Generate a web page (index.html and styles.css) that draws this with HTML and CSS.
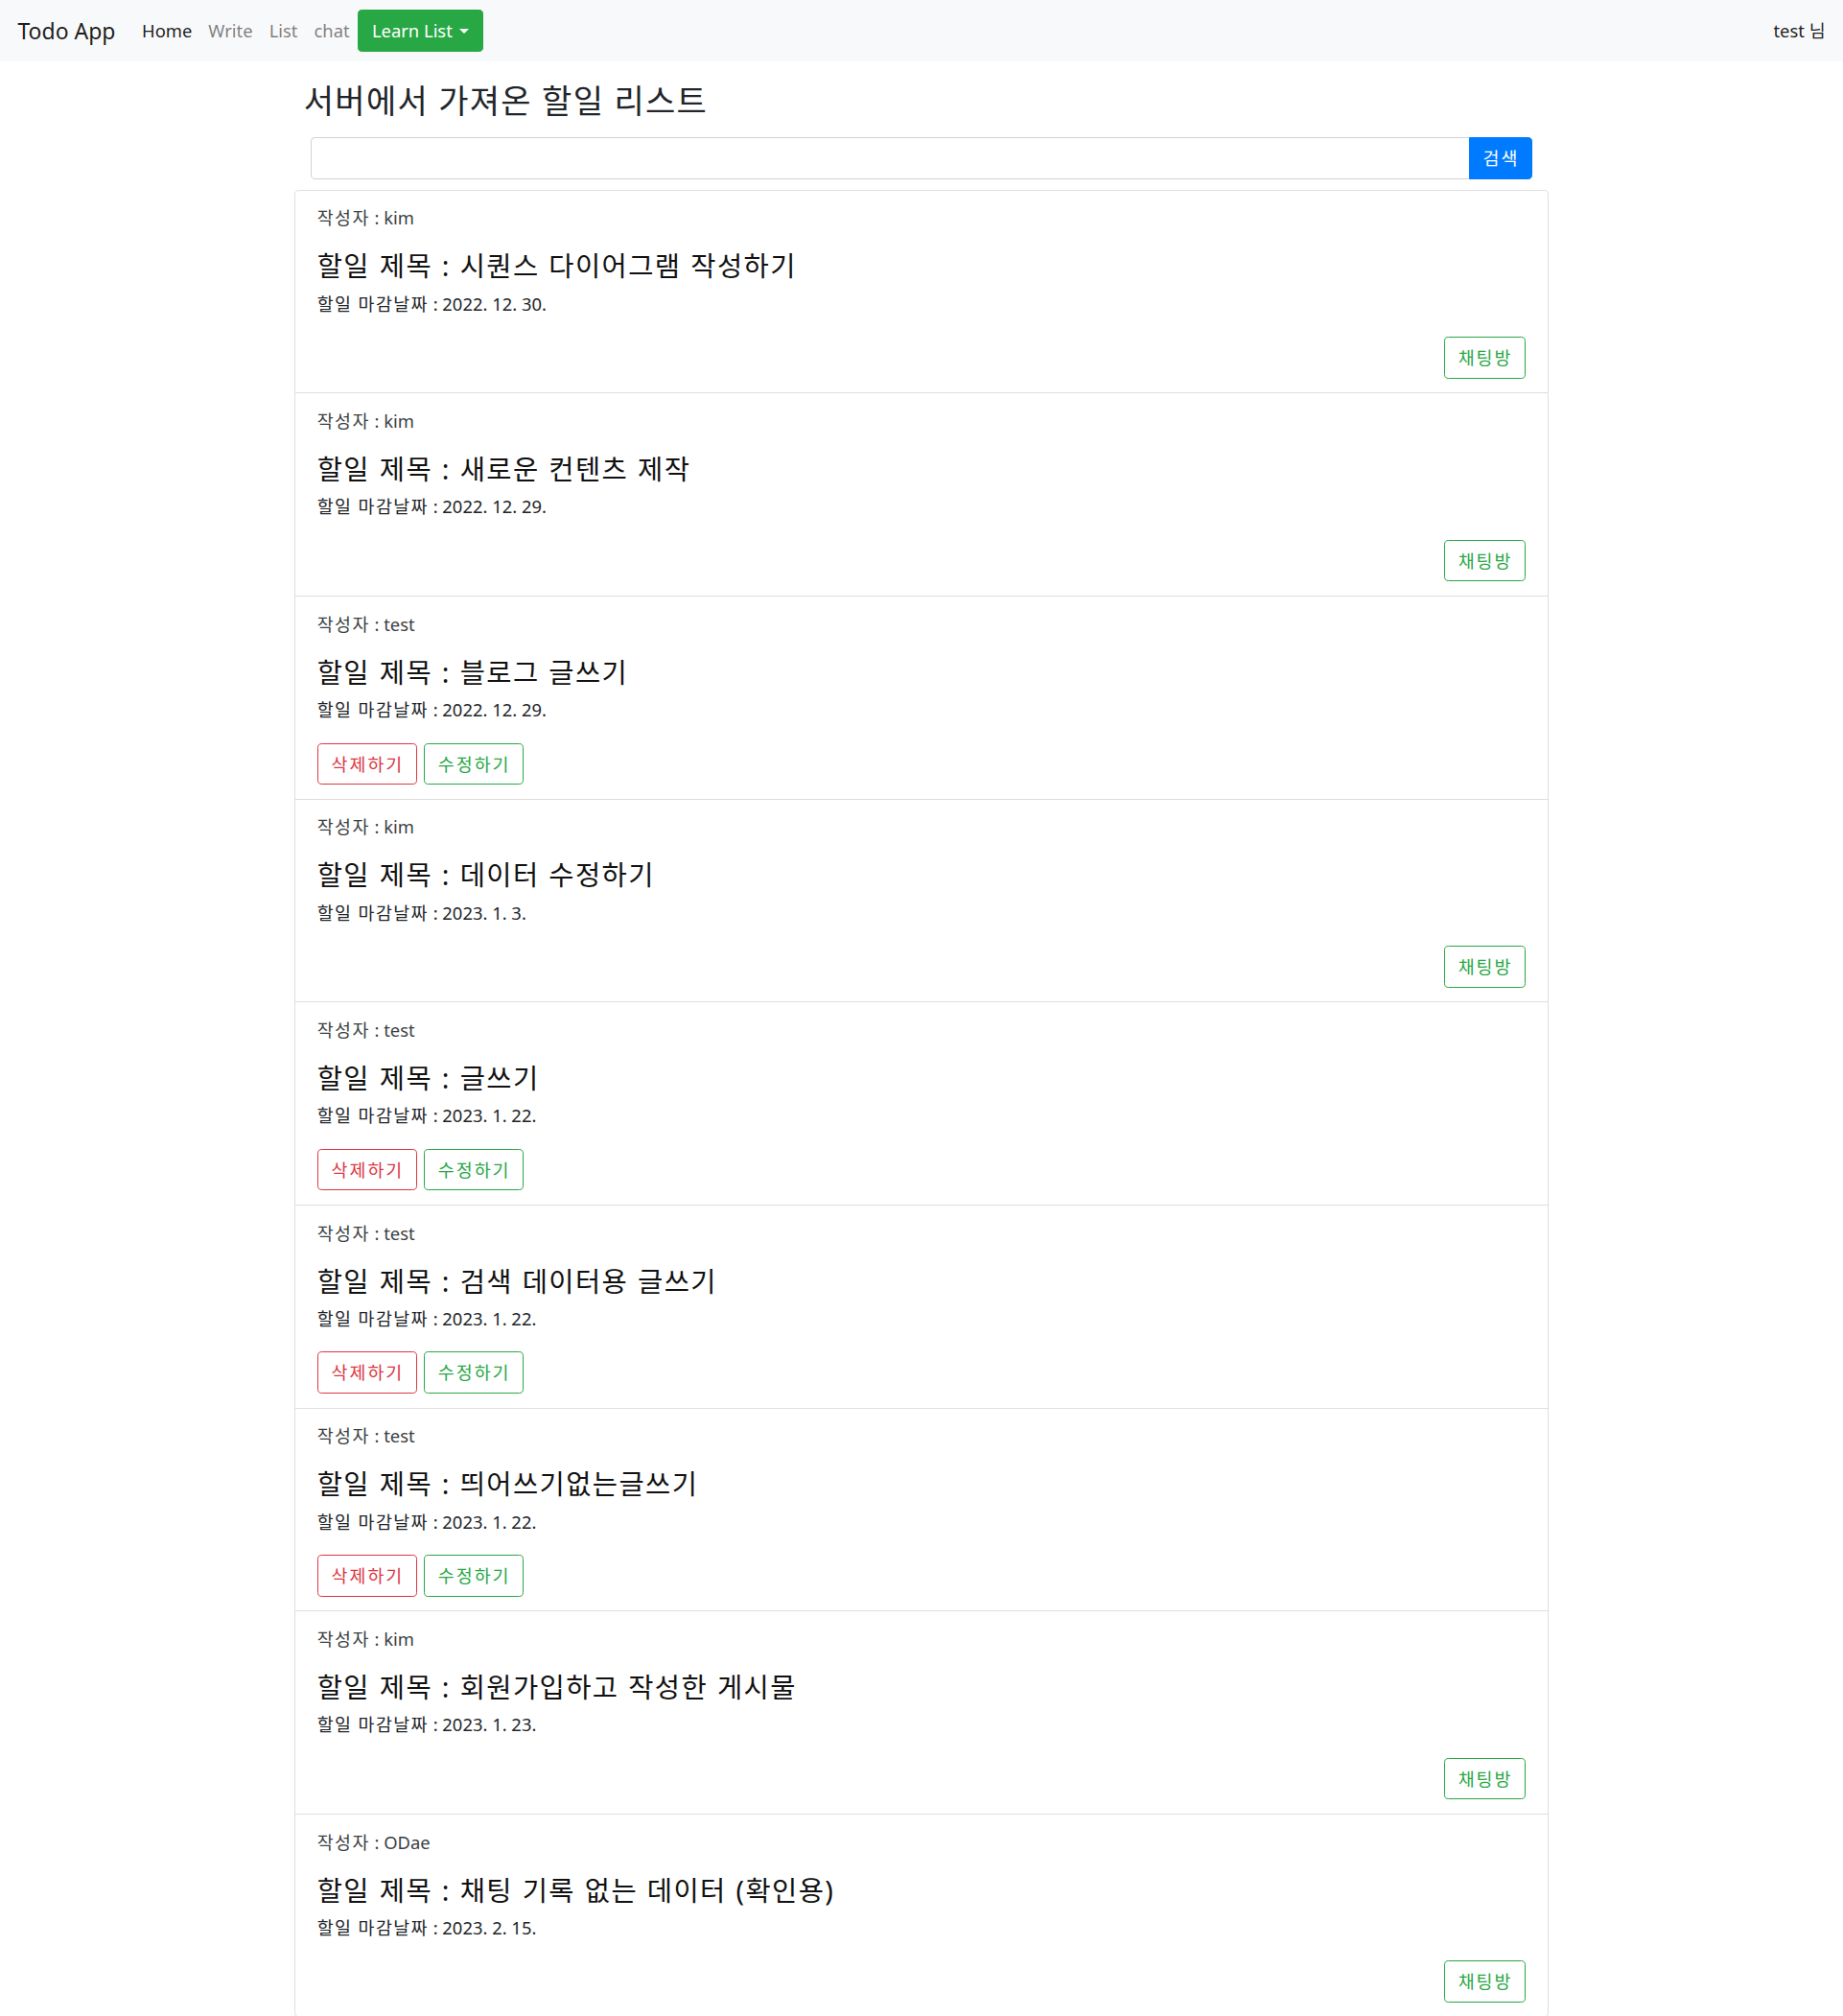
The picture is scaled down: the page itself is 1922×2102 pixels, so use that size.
FILE: index.html
```html
<!DOCTYPE html>
<html lang="ko">
<head>
<meta charset="utf-8">
<title>Todo App</title>
<link rel="stylesheet" href="styles.css">
</head>
<body>
<nav class="navbar">
  <a class="brand" href="#">Todo App</a>
  <ul class="nav">
    <li><a class="nav-link active" href="#">Home</a></li>
    <li><a class="nav-link" href="#">Write</a></li>
    <li><a class="nav-link" href="#">List</a></li>
    <li><a class="nav-link" href="#">chat</a></li>
    <li><button class="btn btn-success dropdown-toggle">Learn List</button></li>
  </ul>
  <span class="user">test 님</span>
</nav>

<main class="container">
  <h3 class="page-title">서버에서 가져온 할일 리스트</h3>

  <div class="search">
    <input class="search-input" type="text">
    <button class="btn btn-primary search-btn ko-btn">검색</button>
  </div>

  <ul class="list-group">
    <li class="item">
      <p class="author"><span class="ko">작성자</span> : kim</p>
      <h4 class="todo-title">할일 제목 : 시퀀스 다이어그램 작성하기</h4>
      <p class="due"><span class="ko">할일 마감날짜</span> : 2022. 12. 30.</p>
      <div class="actions end"><button class="btn btn-outline-success ko-btn">채팅방</button></div>
    </li>
    <li class="item">
      <p class="author"><span class="ko">작성자</span> : kim</p>
      <h4 class="todo-title">할일 제목 : 새로운 컨텐츠 제작</h4>
      <p class="due"><span class="ko">할일 마감날짜</span> : 2022. 12. 29.</p>
      <div class="actions end"><button class="btn btn-outline-success ko-btn">채팅방</button></div>
    </li>
    <li class="item">
      <p class="author"><span class="ko">작성자</span> : test</p>
      <h4 class="todo-title">할일 제목 : 블로그 글쓰기</h4>
      <p class="due"><span class="ko">할일 마감날짜</span> : 2022. 12. 29.</p>
      <div class="actions"><button class="btn btn-outline-danger ko-btn">삭제하기</button><button class="btn btn-outline-success ko-btn">수정하기</button></div>
    </li>
    <li class="item">
      <p class="author"><span class="ko">작성자</span> : kim</p>
      <h4 class="todo-title">할일 제목 : 데이터 수정하기</h4>
      <p class="due"><span class="ko">할일 마감날짜</span> : 2023. 1. 3.</p>
      <div class="actions end"><button class="btn btn-outline-success ko-btn">채팅방</button></div>
    </li>
    <li class="item">
      <p class="author"><span class="ko">작성자</span> : test</p>
      <h4 class="todo-title">할일 제목 : 글쓰기</h4>
      <p class="due"><span class="ko">할일 마감날짜</span> : 2023. 1. 22.</p>
      <div class="actions"><button class="btn btn-outline-danger ko-btn">삭제하기</button><button class="btn btn-outline-success ko-btn">수정하기</button></div>
    </li>
    <li class="item">
      <p class="author"><span class="ko">작성자</span> : test</p>
      <h4 class="todo-title">할일 제목 : 검색 데이터용 글쓰기</h4>
      <p class="due"><span class="ko">할일 마감날짜</span> : 2023. 1. 22.</p>
      <div class="actions"><button class="btn btn-outline-danger ko-btn">삭제하기</button><button class="btn btn-outline-success ko-btn">수정하기</button></div>
    </li>
    <li class="item">
      <p class="author"><span class="ko">작성자</span> : test</p>
      <h4 class="todo-title">할일 제목 : 띄어쓰기없는글쓰기</h4>
      <p class="due"><span class="ko">할일 마감날짜</span> : 2023. 1. 22.</p>
      <div class="actions"><button class="btn btn-outline-danger ko-btn">삭제하기</button><button class="btn btn-outline-success ko-btn">수정하기</button></div>
    </li>
    <li class="item">
      <p class="author"><span class="ko">작성자</span> : kim</p>
      <h4 class="todo-title">할일 제목 : 회원가입하고 작성한 게시물</h4>
      <p class="due"><span class="ko">할일 마감날짜</span> : 2023. 1. 23.</p>
      <div class="actions end"><button class="btn btn-outline-success ko-btn">채팅방</button></div>
    </li>
    <li class="item">
      <p class="author"><span class="ko">작성자</span> : ODae</p>
      <h4 class="todo-title">할일 제목 : 채팅 기록 없는 데이터 (확인용)</h4>
      <p class="due"><span class="ko">할일 마감날짜</span> : 2023. 2. 15.</p>
      <div class="actions end"><button class="btn btn-outline-success ko-btn">채팅방</button></div>
    </li>
  </ul>
</main>
</body>
</html>
```

FILE: styles.css
```css
* { box-sizing: border-box; }

html, body { margin: 0; padding: 0; }

body {
  font-family: "Noto Sans", "Noto Sans CJK KR", sans-serif;
  font-size: 18.4px;
  line-height: 27.6px;
  color: #212529;
  background: #fff;
}

/* navbar */
.navbar {
  display: flex;
  align-items: center;
  height: 64.4px;
  padding: 0 18.4px;
  background: #f8f9fa;
}
.brand {
  font-size: 23px;
  line-height: 34.5px;
  color: rgba(0,0,0,.9);
  text-decoration: none;
  margin-right: 19px;
}
.nav {
  display: flex;
  align-items: center;
  list-style: none;
  margin: 0;
  padding: 0;
}
.nav-link {
  display: block;
  padding: 9.2px 8.5px;
  color: rgba(0,0,0,.5);
  text-decoration: none;
}
.nav-link.active { color: rgba(0,0,0,.9); }
.user {
  margin-left: auto;
  color: rgba(0,0,0,.9);
}

/* buttons */
.btn {
  display: inline-block;
  font-family: inherit;
  font-size: 18.4px;
  line-height: 27.6px;
  padding: 7px 13.8px;
  border: 1px solid transparent;
  border-radius: 4.6px;
  background: transparent;
  cursor: pointer;
}
.ko-btn {
  letter-spacing: 2px;
  padding-right: 12.8px;
}
.btn-success { background: #28a745; border-color: #28a745; color: #fff; }
.btn-primary { background: #007bff; border-color: #007bff; color: #fff; }
.btn-outline-success { border-color: #28a745; color: #28a745; }
.btn-outline-danger { border-color: #dc3545; color: #dc3545; }

.dropdown-toggle::after {
  content: "";
  display: inline-block;
  margin-left: 7px;
  vertical-align: 4.7px;
  border-top: 5.5px solid;
  border-right: 5.5px solid transparent;
  border-left: 5.5px solid transparent;
}

/* content */
.container {
  width: 1308.5px;
  margin: 0 auto;
}
.page-title {
  margin: 21.5px 0 17.8px;
  padding-left: 10px;
  font-size: 34px;
  line-height: 39px;
  font-weight: 400;
  letter-spacing: 1.3px;
}

.search {
  display: flex;
  height: 44px;
  margin: 0 17px 11px;
}
.search-input {
  flex: 1;
  min-width: 0;
  height: 44px;
  border: 1px solid #ced4da;
  border-right: 0;
  border-radius: 4.6px 0 0 4.6px;
  font: inherit;
  padding: 7px 13.8px;
}
.search-btn {
  height: 44px;
  border-radius: 0 4.6px 4.6px 0;
}

.list-group {
  list-style: none;
  margin: 0;
  padding: 0;
}
.item {
  border: 1px solid #dfdfdf;
  border-top-width: 0;
  padding: 14.8px 23px 14.5px;
}
.item:first-child {
  border-top-width: 1px;
  border-radius: 4.6px 4.6px 0 0;
}
.item:last-child { border-radius: 0 0 4.6px 4.6px; }

.ko { letter-spacing: 1.4px; }

.author {
  margin: 0 0 20.4px;
  color: #3b3f44;
}
.todo-title {
  margin: 0 0 8.2px;
  font-size: 28.5px;
  line-height: 33px;
  font-weight: 400;
  letter-spacing: 1.4px;
  word-spacing: 1px;
  color: #111;
}
.due {
  margin: 0 0 16.4px;
}
.actions {
  display: flex;
  gap: 7px;
  padding-top: 4.6px;
}
.actions .btn { height: 43.6px; }
.actions.end { justify-content: flex-end; }
```
